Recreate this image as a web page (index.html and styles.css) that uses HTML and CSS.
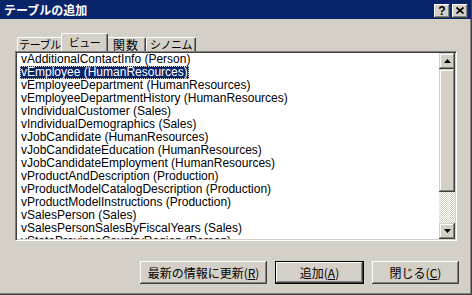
FILE: index.html
```html
<!DOCTYPE html>
<html lang="ja">
<head>
<meta charset="utf-8">
<title>テーブルの追加</title>
<link rel="stylesheet" href="styles.css">
</head>
<body>
<div class="window">
  <div class="titlebar">
    <span class="title">テーブルの追加</span>
    <div class="caption-buttons">
      <div class="cap-btn help">?</div>
      <div class="cap-btn">
        <svg width="8" height="7" viewBox="0 0 8 7"><path d="M0.5 0.5 L7.5 6.5 M7.5 0.5 L0.5 6.5" stroke="#000" stroke-width="1.7" fill="none"/></svg>
      </div>
    </div>
  </div>
  <div class="content">
    <div class="tabs">
      <div class="tab tab-tables kana">テーブル</div>
      <div class="tab tab-views kana active">ビュー</div>
      <div class="tab tab-funcs">関数</div>
      <div class="tab tab-syn kana">シノニム</div>
    </div>
    <div class="listbox">
      <ul class="items">
        <li><span>vAdditionalContactInfo (Person)</span></li>
        <li class="sel"><span>vEmployee (HumanResources)</span></li>
        <li><span>vEmployeeDepartment (HumanResources)</span></li>
        <li><span>vEmployeeDepartmentHistory (HumanResources)</span></li>
        <li><span>vIndividualCustomer (Sales)</span></li>
        <li><span>vIndividualDemographics (Sales)</span></li>
        <li><span>vJobCandidate (HumanResources)</span></li>
        <li><span>vJobCandidateEducation (HumanResources)</span></li>
        <li><span>vJobCandidateEmployment (HumanResources)</span></li>
        <li><span>vProductAndDescription (Production)</span></li>
        <li><span>vProductModelCatalogDescription (Production)</span></li>
        <li><span>vProductModelInstructions (Production)</span></li>
        <li><span>vSalesPerson (Sales)</span></li>
        <li><span>vSalesPersonSalesByFiscalYears (Sales)</span></li>
        <li><span>vStateProvinceCountryRegion (Person)</span></li>
      </ul>
      <div class="scrollbar">
        <div class="sb-btn"><svg width="7" height="4" viewBox="0 0 7 4"><polygon points="3.5,0 7,4 0,4" fill="#000"/></svg></div>
        <div class="sb-thumb"></div>
        <div class="sb-track"></div>
        <div class="sb-btn"><svg width="7" height="4" viewBox="0 0 7 4"><polygon points="0,0 7,0 3.5,4" fill="#000"/></svg></div>
      </div>
    </div>
    <div class="actions">
      <button class="btn refresh">最新の情報に更新(<u>R</u>)</button>
      <button class="btn add default">追加(<u>A</u>)</button>
      <button class="btn close">閉じる(<u>C</u>)</button>
    </div>
  </div>
</div>
</body>
</html>
```

FILE: styles.css
```css
* { box-sizing: border-box; }
html, body { margin: 0; padding: 0; }
body {
  width: 472px;
  height: 295px;
  overflow: hidden;
  background: #d4d0c8;
  font-family: "Noto Sans CJK JP", sans-serif;
  font-size: 12px;
  color: #000;
}
.window {
  width: 472px;
  height: 295px;
  display: flex;
  flex-direction: column;
  background: #d4d0c8;
  border-right: 1px solid #404040;
  border-bottom: 1px solid #404040;
  box-shadow: inset -1px -1px #808080;
}
.titlebar {
  height: 19px;
  flex: none;
  background: #0a246a;
  display: flex;
  align-items: center;
  justify-content: space-between;
  padding: 0 3px 0 4px;
}
.title {
  color: #fff;
  font-weight: bold;
  font-size: 12px;
  line-height: 14px;
}
.caption-buttons {
  display: flex;
  gap: 2px;
  margin-top: 2px;
}
.cap-btn {
  width: 16px;
  height: 14px;
  background: #d4d0c8;
  display: flex;
  align-items: center;
  justify-content: center;
  box-shadow: inset -1px -1px #404040, inset 1px 1px #fff, inset -2px -2px #808080;
  font-family: "Liberation Sans", sans-serif;
  font-weight: bold;
  font-size: 12px;
  line-height: 12px;
}
.content {
  flex: 1;
  padding: 14px 0 0 15px;
  display: flex;
  flex-direction: column;
}
.tabs {
  height: 18px;
  display: flex;
  align-items: flex-end;
  padding-left: 2px;
}
.tab {
  height: 14px;
  line-height: 13px;
  padding: 0;
  text-align: center;
  border-top: 1px solid #fff;
  border-left: 1px solid #fff;
  border-right: 1px solid #404040;
  border-radius: 2px 2px 0 0;
  box-shadow: inset -1px 0 #808080;
  white-space: nowrap;
}
.tab.kana {
  font-size: 11px;
  letter-spacing: -0.5px;
}
.tab-tables { width: 46px; }
.tab-views { width: 43px; }
.tab-funcs { width: 40px; letter-spacing: 1px; }
.tab-syn { width: 50px; }
.tab.active {
  width: 47px;
  height: 18px;
  line-height: 14px;
  margin: 0 -2px;
  padding-top: 1px;
  position: relative;
  z-index: 1;
  background: #d4d0c8;
}
.listbox {
  width: 442px;
  height: 190px;
  flex: none;
  display: flex;
  background: #fff;
  border: 1px solid;
  border-color: #808080 #fff #fff #808080;
  padding: 1px;
  box-shadow: inset 1px 1px #404040, inset -1px -1px #d4d0c8;
}
.items {
  flex: 1;
  margin: 0;
  padding: 0 0 0 3px;
  list-style: none;
  overflow: hidden;
  font-family: "Liberation Sans", "Noto Sans CJK JP", sans-serif;
  font-size: 12px;
}
.items li {
  height: 13px;
  line-height: 13px;
  white-space: nowrap;
}
.items li span {
  display: inline-block;
  padding: 0 1px;
  height: 13px;
}
.items li.sel span {
  background: #0a246a;
  color: #fff;
  outline: 1px dotted #d4d0c8;
  outline-offset: -1px;
}
.scrollbar {
  width: 16px;
  flex: none;
  display: flex;
  flex-direction: column;
}
.sb-btn, .sb-thumb {
  background: #d4d0c8;
  box-shadow: inset -1px -1px #404040, inset 1px 1px #d4d0c8, inset -2px -2px #808080, inset 2px 2px #fff;
}
.sb-btn {
  height: 16px;
  flex: none;
  display: flex;
  align-items: center;
  justify-content: center;
}
.sb-thumb {
  height: 123px;
  flex: none;
}
.sb-track {
  flex: 1;
  background: repeating-conic-gradient(#fff 0 25%, #d4d0c8 0 50%) 0 0 / 2px 2px;
}
.actions {
  display: flex;
  justify-content: flex-end;
  align-items: center;
  gap: 8px;
  margin-top: 20px;
  padding-right: 12px;
}
.btn {
  height: 23px;
  border: none;
  padding: 0;
  background: #d4d0c8;
  font-family: "Noto Sans CJK JP", sans-serif;
  font-size: 12px;
  color: #000;
  box-shadow: inset -1px -1px #404040, inset 1px 1px #fff, inset -2px -2px #808080, inset 2px 2px #d4d0c8;
}
.btn.default {
  border: 1px solid #000;
}
.btn.refresh { width: 127px; }
.btn.add { width: 89px; }
.btn.close { width: 87px; }
```
